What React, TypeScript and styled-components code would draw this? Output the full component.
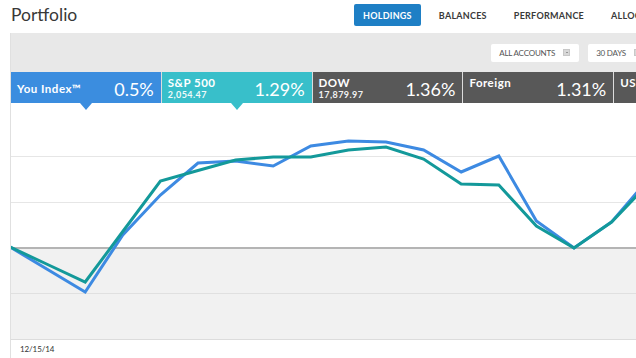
import React from "react";
import styled, { createGlobalStyle, css } from "styled-components";

const Global = createGlobalStyle`
  html, body { margin: 0; padding: 0; background: #fff; }
  body { font-family: Lato, "Open Sans", Arial, sans-serif; -webkit-font-smoothing: antialiased; }
`;

const Page = styled.div`
  width: 636px;
  height: 358px;
  overflow: hidden;
  background: #fff;
`;

const Header = styled.header`
  display: flex;
  align-items: flex-start;
  height: 33px;
`;

const Title = styled.h1`
  flex: 0 0 354px;
  box-sizing: border-box;
  margin: 0;
  padding: 5px 0 0 11px;
  font-size: 17.5px;
  line-height: 20px;
  font-weight: 400;
  color: #383838;
`;

const Nav = styled.nav`
  display: flex;
  gap: 9px;
  padding-top: 4px;
  flex-shrink: 0;
`;

const NavItem = styled.a<{ $active?: boolean }>`
  display: flex;
  align-items: center;
  height: 22px;
  padding: 0 9px;
  font-size: 9px;
  font-weight: 700;
  letter-spacing: 0.25px;
  white-space: nowrap;
  border-radius: 2px;
  color: ${(p) => (p.$active ? "#fff" : "#3a3a3a")};
  background: ${(p) => (p.$active ? "#1e7fc5" : "transparent")};
`;

const Panel = styled.section`
  margin-left: 10px;
  width: 660px;
  border-left: 1px solid #e0e0e0;
  background: #fff;
`;

const Toolbar = styled.div`
  display: flex;
  justify-content: flex-end;
  align-items: center;
  gap: 9px;
  height: 39px;
  box-sizing: border-box;
  padding-right: 21px;
  background: #e8e8e8;
`;

const Dropdown = styled.button`
  display: flex;
  align-items: center;
  gap: 8px;
  height: 18px;
  padding: 0 9px 0 8px;
  border: none;
  border-radius: 2px;
  background: #fff;
  font-family: Lato, "Open Sans", Arial, sans-serif;
  font-size: 8px;
  letter-spacing: -0.2px;
  color: #555;
  white-space: nowrap;
`;

const Caret = styled.span`
  display: inline-flex;
  align-items: center;
  justify-content: center;
  width: 5px;
  height: 5px;
  background: #d8d8d8;
  border: 1px solid #c8c8c8;
  &::after {
    content: "";
    border-left: 1.5px solid transparent;
    border-right: 1.5px solid transparent;
    border-top: 1.5px solid #555;
  }
`;

const Tabs = styled.div`
  display: flex;
  height: 31px;
`;

const Tab = styled.div<{ $bg: string; $pointer?: boolean }>`
  position: relative;
  flex: 0 0 150.8px;
  box-sizing: border-box;
  display: flex;
  align-items: center;
  justify-content: space-between;
  padding: 2px 7px 0 6px;
  background: ${(p) => p.$bg};
  border-right: 1px solid #dcdcdc;
  color: #fff;
  ${(p) =>
    p.$pointer &&
    css`
      &::after {
        content: "";
        position: absolute;
        left: 50%;
        top: 100%;
        margin-left: -6px;
        border-left: 6px solid transparent;
        border-right: 6px solid transparent;
        border-top: 7px solid ${p.$bg};
        z-index: 2;
      }
    `}
`;

const LabelBlock = styled.div<{ $top?: boolean }>`
  display: flex;
  flex-direction: column;
  align-self: ${(p) => (p.$top ? "flex-start" : "center")};
  padding-top: ${(p) => (p.$top ? "3px" : "0")};
`;

const Label = styled.span`
  font-size: 11.5px;
  font-weight: 700;
  line-height: 12px;
  letter-spacing: 0.5px;
  white-space: nowrap;
`;

const Sub = styled.span`
  font-size: 9px;
  font-weight: 700;
  line-height: 11px;
  letter-spacing: 0.45px;
  opacity: 0.92;
`;

const Value = styled.span`
  font-size: 18px;
  font-weight: 400;
  line-height: 20px;
  white-space: nowrap;
`;

const Chart = styled.div`
  height: 237px;
  background: #fff;
`;

const ChartSvg = styled.svg`
  display: block;
`;

const DateAxis = styled.div`
  display: flex;
  align-items: center;
  height: 18px;
  padding-left: 9px;
  font-size: 8px;
  letter-spacing: -0.1px;
  color: #333;
`;

const blue = [247, 269.5, 292, 235, 195, 163, 161, 166, 146, 141, 142, 150, 172, 156, 221, 248, 222, 178];
const teal = [247, 264.5, 282, 231.5, 181, 170.5, 160, 157, 157, 150, 147, 159, 184, 185, 226, 248, 222, 183];

const toPoints = (ys: number[]) => ys.map((y, i) => `${(10 + i * 37.6).toFixed(1)},${y}`).join(" ");

type TabData = { label: string; sub?: string; value: string; bg: string; pointer?: boolean; top?: boolean };

const tabs: TabData[] = [
  { label: "You Index™", value: "0.5%", bg: "#3b8ddf", pointer: true },
  { label: "S&P 500", sub: "2,054.47", value: "1.29%", bg: "#38bfca", pointer: true },
  { label: "DOW", sub: "17,879.97", value: "1.36%", bg: "#585858" },
  { label: "Foreign", value: "1.31%", bg: "#585858", top: true },
  { label: "US", value: "", bg: "#585858", top: true },
];

export default function App() {
  return (
    <Page>
      <Global />
      <Header>
        <Title>Portfolio</Title>
        <Nav>
          <NavItem $active>HOLDINGS</NavItem>
          <NavItem>BALANCES</NavItem>
          <NavItem>PERFORMANCE</NavItem>
          <NavItem>ALLOCATION</NavItem>
        </Nav>
      </Header>
      <Panel>
        <Toolbar>
          <Dropdown>
            ALL ACCOUNTS <Caret />
          </Dropdown>
          <Dropdown>
            30 DAYS <Caret />
          </Dropdown>
        </Toolbar>
        <Tabs>
          {tabs.map((t) => (
            <Tab key={t.label} $bg={t.bg} $pointer={t.pointer}>
              <LabelBlock $top={t.top}>
                <Label>{t.label}</Label>
                {t.sub && <Sub>{t.sub}</Sub>}
              </LabelBlock>
              <Value>{t.value}</Value>
            </Tab>
          ))}
        </Tabs>
        <Chart>
          <ChartSvg width={660} height={237} viewBox="11 103 660 237">
            <rect x={11} y={249} width={660} height={90} fill="#f1f1f1" />
            <line x1={11} x2={671} y1={156.5} y2={156.5} stroke="#e6e6e6" />
            <line x1={11} x2={671} y1={202.5} y2={202.5} stroke="#e6e6e6" />
            <line x1={11} x2={671} y1={293.5} y2={293.5} stroke="#e0e0e0" />
            <line x1={11} x2={671} y1={339.5} y2={339.5} stroke="#dcdcdc" />
            <line x1={11} x2={671} y1={248} y2={248} stroke="#b4b4b4" strokeWidth={2} />
            <polyline points={toPoints(blue)} fill="none" stroke="#3d8ae2" strokeWidth={3} />
            <polyline points={toPoints(teal)} fill="none" stroke="#13999a" strokeWidth={3} />
          </ChartSvg>
        </Chart>
        <DateAxis>12/15/14</DateAxis>
      </Panel>
    </Page>
  );
}
